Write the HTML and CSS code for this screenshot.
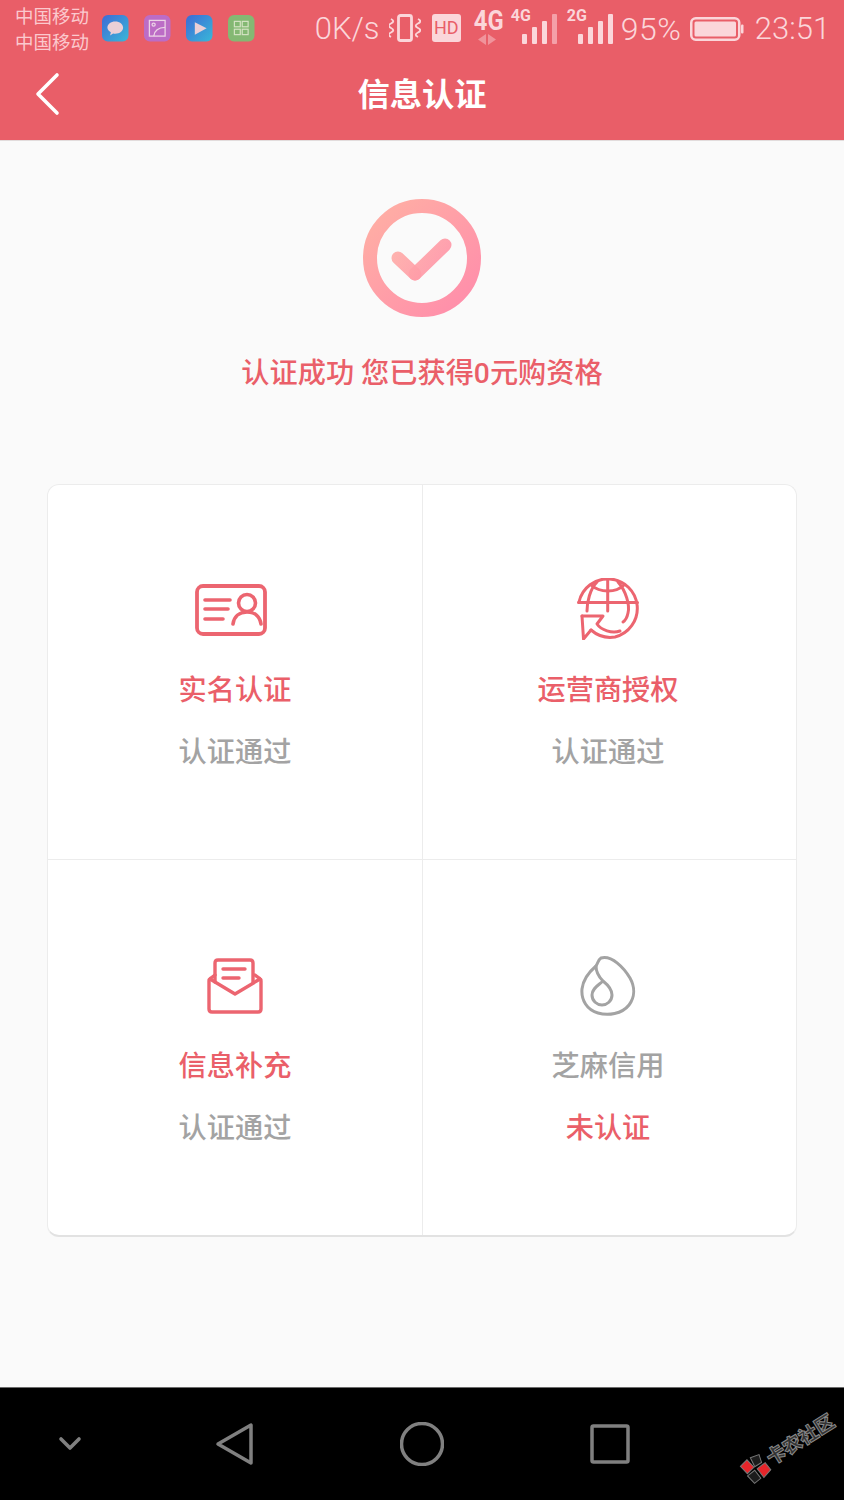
FILE: index.html
```html
<!DOCTYPE html>
<html lang="zh">
<head>
<meta charset="utf-8">
<title>信息认证</title>
<link rel="stylesheet" href="styles.css">
</head>
<body>
<div class="screen">
  <header class="top">
    <div class="status">
      <div class="carriers"><span>中国移动</span><span>中国移动</span></div>
      <div class="apps">
        <svg class="app" viewBox="0 0 27 27"><defs><linearGradient id="blue" x1="0" y1="0" x2="1" y2="1"><stop offset="0" stop-color="#3e6ad6"/><stop offset="1" stop-color="#38b8d8"/></linearGradient></defs><rect width="27" height="27" rx="6" fill="url(#blue)"/><path d="M13.500 6.500c4.600 0 8 2.800 8 6.300s-3.400 6.300-8 6.300c-.8 0-1.500-.1-2.200-.2l-3 1.900.7-3.100c-2-1.200-3.500-2.900-3.500-4.900 0-3.500 3.400-6.300 8-6.300z" fill="#ebcfd6"/></svg>
        <svg class="app" viewBox="0 0 27 27"><rect width="27" height="27" rx="6" fill="#bc6cc6"/><g fill="none" stroke="#ecd3e6" stroke-width="1.300"><rect x="5.500" y="5.500" width="16" height="16"/><circle cx="9.800" cy="9.800" r="1.600"/><path d="M10 21.500c.6-5 4.500-8.600 11.500-8.800"/></g></svg>
        <svg class="app" viewBox="0 0 27 27"><rect width="27" height="27" rx="6" fill="url(#blue)"/><path d="M9 7.500l12 6-12 6.500z" fill="#ebcfd6"/></svg>
        <svg class="app" viewBox="0 0 27 27"><rect width="27" height="27" rx="6" fill="#84b873"/><g fill="none" stroke="#d5e3c4" stroke-width="1.200"><rect x="6.500" y="6.500" width="6" height="5.500"/><rect x="14.500" y="6.500" width="6" height="5.500"/><rect x="6.500" y="14.500" width="6" height="5.500"/><rect x="14.500" y="14.500" width="6" height="5.500"/></g></svg>
      </div>
      <div class="indicators">
        <span class="speed">0K/s</span>
        <svg class="vib" viewBox="0 0 32 28"><rect x="9.500" y="1.500" width="13" height="25" rx="2" fill="none" stroke="#fbd6da" stroke-width="2.800"/><g fill="none" stroke="#fbd6da" stroke-width="1.900"><path d="M2 5c3 1.500 3 3 0 4.500s-3 3 0 4.500 3 3 0 4.500-3 3 0 4.500"/><path d="M29 5c3 1.500 3 3 0 4.500s-3 3 0 4.500 3 3 0 4.500-3 3 0 4.500"/></g></svg>
        <span class="hd">HD</span>
        <div class="fourg"><span>4G</span><svg viewBox="0 0 20 13" class="arrows"><path d="M9 1v11L1 6.500zM11 1v11l8-5.500z" fill="#f0939b"/></svg></div>
        <div class="net n1">
          <span>4G</span>
          <svg class="bars" viewBox="0 0 36 30"><rect x="0" y="20" width="5" height="10" rx="1"/><rect x="10" y="13" width="5" height="17" rx="1"/><rect x="20" y="7" width="5" height="23" rx="1"/><rect x="30" y="0" width="5" height="30" rx="1" class="dim"/></svg>
        </div>
        <div class="net n2">
          <span>2G</span>
          <svg class="bars" viewBox="0 0 36 30"><rect x="0" y="20" width="5" height="10" rx="1"/><rect x="10" y="13" width="5" height="17" rx="1"/><rect x="20" y="7" width="5" height="23" rx="1"/><rect x="30" y="0" width="5" height="30" rx="1"/></svg>
        </div>
        <span class="pct">95%</span>
        <svg class="batt" viewBox="0 0 54 24"><rect x="1.250" y="1.250" width="48" height="21.500" rx="4.500" fill="none" stroke="#fbd6da" stroke-width="2.500"/><rect x="4.500" y="4.500" width="41.500" height="15" rx="1.500" fill="#fbd6da"/><rect x="51" y="7.500" width="2.500" height="9" rx="1" fill="#fbd6da"/></svg>
        <span class="clock">23:51</span>
      </div>
    </div>
    <div class="nav">
      <svg class="back" viewBox="0 0 26 44"><path d="M23 3L4 22l19 19" fill="none" stroke="#fff" stroke-width="3.600" stroke-linecap="round" stroke-linejoin="round"/></svg>
      <h1>信息认证</h1>
    </div>
  </header>
  <main class="body">
    <svg class="ok" viewBox="0 0 118 118">
      <defs>
        <linearGradient id="pk" x1="0" y1="0" x2="1" y2="1"><stop offset="0" stop-color="#ffb0a4"/><stop offset="1" stop-color="#ff8cab"/></linearGradient>
        <linearGradient id="pk2" gradientUnits="userSpaceOnUse" x1="30" y1="40" x2="90" y2="80"><stop offset="0" stop-color="#ffb0a8"/><stop offset="1" stop-color="#ff8fa8"/></linearGradient>
      </defs>
      <circle cx="59" cy="59" r="52" fill="none" stroke="url(#pk)" stroke-width="14"/>
      <path d="M35 59l17 16" stroke="url(#pk2)" stroke-width="13" stroke-linecap="round" fill="none" opacity=".92"/>
      <path d="M52 75l30-29" stroke="url(#pk2)" stroke-width="13" stroke-linecap="round" fill="none" opacity=".92"/>
    </svg>
    <p class="msg">认证成功 您已获得0元购资格</p>
    <section class="card">
      <div class="cell">
        <svg class="ic ic-id" viewBox="0 0 72 52"><g fill="none" stroke="#ec6570" stroke-linecap="round" stroke-linejoin="round"><rect x="2" y="2" width="68" height="48" rx="6" stroke-width="3.800"/><path d="M10 16h25M10 25h23M10 35h18" stroke-width="3.600"/><circle cx="52" cy="19" r="8.500" stroke-width="3.600"/><path d="M38 40c1-7 6-12 14-12s13 5 14 12" stroke-width="3.600"/></g></svg>
        <div class="title">实名认证</div>
        <div class="state">认证通过</div>
      </div>
      <div class="cell">
        <svg class="ic ic-globe" viewBox="17 9 62 62"><g fill="none" stroke="#ec6570" stroke-width="3" stroke-linecap="round" stroke-linejoin="round"><path d="M19 33A29.500 29.500 0 1 1 55 68C46 69.500 38 67 31 61"/><path d="M22 47l1.500 23L31 61"/><path d="M22 47H43L37 55C41 61 52 65 60 62"/><path d="M18.500 33.500H77.500"/><path d="M47.700 10V42"/><path d="M37 13C30 20 27 33 27 42"/><path d="M58 13C66 22 70 36 68 44 67 49 66 51 63 53"/><path d="M31 16C40 24 56 24 64 16"/></g></svg>
        <div class="title">运营商授权</div>
        <div class="state">认证通过</div>
      </div>
      <div class="cell">
        <svg class="ic ic-mail" viewBox="0 0 56 56"><g fill="none" stroke="#ec6570" stroke-width="3.400" stroke-linecap="round" stroke-linejoin="round"><path d="M8 24V5c0-2 1-3 3-3h32c2 0 3 1 3 3v19"/><path d="M8 17l-4 3c-1.500 1-2 2-2 3v28c0 2 1 3 3 3h46c2 0 3-1 3-3V23c0-1-.5-2-2-3l-4-3"/><path d="M3 21l25 15 25-15"/><path d="M16 11h22M16 20h16"/></g></svg>
        <div class="title">信息补充</div>
        <div class="state">认证通过</div>
      </div>
      <div class="cell">
        <svg class="ic ic-sesame" viewBox="0 0 56 62"><g fill="none" stroke="#a3a3a3" stroke-width="3" stroke-linecap="round" stroke-linejoin="round"><path d="M21 3c11-3 23 10 29 20 5 9 5 19-1 27-7 9-21 11-31 8C7 55 1 45 2 34c1-9 7-17 14-23 2-3 2-6 5-8z"/><path d="M16 11c0 6 3 11 7 15 5 4 9 8 9 14 0 6-5 10-10 10s-10-4-10-10c0-7 7-10 11-14"/></g></svg>
        <div class="title gray">芝麻信用</div>
        <div class="state red">未认证</div>
      </div>
    </section>
  </main>
  <footer class="sysbar">
    <svg class="k-down" viewBox="0 0 24 16"><path d="M3 3l9 9 9-9" fill="none" stroke="#808080" stroke-width="3.600" stroke-linecap="round" stroke-linejoin="round"/></svg>
    <svg class="k-back" viewBox="0 0 40 44"><path d="M36 3v38L3 22z" fill="none" stroke="#808080" stroke-width="3.500" stroke-linejoin="round"/></svg>
    <svg class="k-home" viewBox="0 0 44 44"><circle cx="22" cy="22" r="20.500" fill="none" stroke="#808080" stroke-width="3.500"/></svg>
    <svg class="k-recent" viewBox="0 0 40 40"><rect x="2" y="2" width="36" height="36" rx="1.500" fill="none" stroke="#808080" stroke-width="3.500"/></svg>
    <div class="mark">
      <svg class="flower" viewBox="0 0 28 28"><path d="M2 4l9-2 2 10-9 2z" fill="#e5252a" stroke="#777" stroke-width="1"/><path d="M15 15l10-1 1 9-10 3z" fill="#e5252a" stroke="#777" stroke-width="1"/><path d="M15 2l9 2-2 8-8 0z" fill="#1c1c1c" stroke="#777" stroke-width="1"/><path d="M3 16l9-1 1 10-8 1z" fill="#1c1c1c" stroke="#777" stroke-width="1"/></svg>
      <span>卡农社区</span>
    </div>
  </footer>
</div>
</body>
</html>
```

FILE: styles.css
```css
* { box-sizing: border-box; }
html, body { margin: 0; padding: 0; }
body { background: #fafafa; font-family: "Roboto", "Noto Sans CJK SC", sans-serif; }
.screen { width: 844px; height: 1500px; display: flex; flex-direction: column; overflow: hidden; }

.top { height: 141px; background: #e95e68; border-bottom: 1px solid #e2dcdc; flex: none; }
.status { height: 57px; display: flex; align-items: flex-start; color: #fbd6da; padding-left: 15px; }
.carriers { display: flex; flex-direction: column; font-size: 18.500px; line-height: 26px; margin-top: 4px; width: 74px; color: #fbc9ce; }
.carriers span { display: block; white-space: nowrap; }
.apps { display: flex; gap: 15.600px; margin-left: 13px; margin-top: 15px; }
.app { width: 26.500px; height: 26.500px; display: block; }
.indicators { position: relative; flex: 1; height: 57px; display: flex; align-items: flex-start; }
.speed { font-size: 31px; line-height: 36px; margin: 11px 0 0 60px; font-weight: 300; width: 73px; white-space: nowrap; }
.vib { width: 32px; height: 28px; margin: 14px 0 0 1px; flex: none; }
.hd { width: 29px; height: 28px; background: #fbd6da; color: #e95e68; border-radius: 3px; font-size: 18px; line-height: 28px; text-align: center; margin: 14px 0 0 11px; flex: none; }
.fourg { margin-left: 11px; width: 30px; flex: none; font-weight: 700; font-size: 27px; line-height: 24px; margin-top: 9px; text-align: center; }
.fourg span { display: block; transform: scaleX(.88); }
.arrows { display: block; width: 20px; height: 13px; margin: 0 auto; }
.net { position: relative; width: 47px; height: 44px; margin: 0; flex: none; }
.net span { position: absolute; left: 0; top: 8px; font-size: 16px; line-height: 15px; font-weight: 700; }
.bars { position: absolute; left: 11px; top: 14px; width: 36px; height: 30px; fill: #fbd6da; }
.bars .dim { fill: #f4a0a8; }
.n1 { margin-left: 9px; }
.n2 { margin-left: 9px; }
.pct { font-size: 32px; line-height: 36px; font-weight: 300; margin: 11px 0 0 7px; width: 62px; letter-spacing: .5px; white-space: nowrap; }
.batt { width: 54px; height: 24px; margin: 17px 0 0 7px; flex: none; }
.clock { font-size: 31px; line-height: 36px; font-weight: 300; margin: 11px 0 0 11px; white-space: nowrap; }

.nav { height: 83px; position: relative; display: flex; align-items: center; justify-content: center; }
.nav h1 { margin: 0 0 8px; color: #fff; font-size: 32.300px; font-weight: 700; line-height: 44px; }
.back { position: absolute; left: 34px; top: 15px; width: 26px; height: 44px; }

.body { flex: 1; display: flex; flex-direction: column; align-items: center; padding-top: 58px; }
.ok { width: 118px; height: 118px; display: block; }
.msg { margin: 37px 0 0; color: #ea5f69; font-size: 28.200px; font-weight: 500; line-height: 40px; }
.card { margin-top: 90px; width: 750px; height: 753px; background: #fff; border: 1px solid #ececec; border-bottom-color: #e2e2e2; border-bottom-width: 2px; border-radius: 12px; display: grid; grid-template-columns: 375px 373px; grid-template-rows: 375px 375px; }
.cell { display: flex; flex-direction: column; align-items: center; padding-top: 93px; }
.cell:nth-child(1) { border-right: 1px solid #ececec; border-bottom: 1px solid #ececec; }
.cell:nth-child(2) { border-bottom: 1px solid #ececec; padding-right: 3px; }
.cell:nth-child(3) { border-right: 1px solid #ececec; padding-top: 94px; }
.cell:nth-child(4) { padding-right: 3px; padding-top: 94px; }
.ic { display: block; height: 62px; }
.ic-id { width: 72px; height: 52px; margin: 6px 8px 4px 0; }
.ic-globe { width: 62px; height: 62px; }
.ic-mail { width: 56px; height: 56px; margin-top: 4px; margin-bottom: 2px; }
.ic-sesame { width: 56px; height: 62px; margin-top: 1px; margin-bottom: -1px; }
.title { margin-top: 31px; font-size: 28.200px; font-weight: 500; line-height: 40px; color: #ea5f69; }
.state { margin-top: 22px; font-size: 28.200px; font-weight: 500; line-height: 40px; color: #a3a3a3; }
.title.gray { color: #a3a3a3; }
.state.red { color: #ea5f69; }

.sysbar { height: 113px; background: #000; border-top: 1px solid #6b6b6b; flex: none; position: relative; }
.sysbar svg { position: absolute; }
.k-down { left: 58px; top: 48px; width: 24px; height: 16px; }
.k-back { left: 215px; top: 34px; width: 40px; height: 44px; }
.k-home { left: 400px; top: 34px; width: 44px; height: 44px; }
.k-recent { left: 590px; top: 36px; width: 40px; height: 40px; }
.mark { position: absolute; left: 736px; top: 46px; display: flex; align-items: center; gap: 1px; transform: rotate(-32deg); }
.sysbar .flower { position: static; width: 28px; height: 28px; flex: none; }
.mark span { font-size: 19px; font-weight: 900; line-height: 28px; color: #333; -webkit-text-stroke: 1px #8a8a8a; white-space: nowrap; }
```
